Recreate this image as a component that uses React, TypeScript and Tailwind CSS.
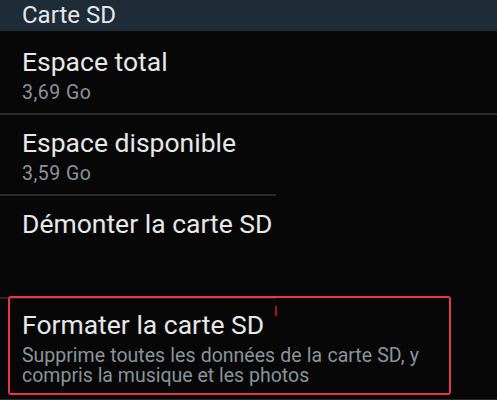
const font = { fontFamily: "Roboto, 'Noto Sans', sans-serif" };

function Row({ title, sub, pt }: { title: string; sub: string; pt: string }) {
  return (
    <div className={`px-[22px] pb-[9px] ${pt}`}>
      <div className="text-[26.5px] leading-[30px] text-[#e8e8e8]">{title}</div>
      <div className="mt-[5px] text-[19.5px] leading-[22px] tracking-[0.5px] text-[#8a949b]">{sub}</div>
    </div>
  );
}

export default function App() {
  return (
    <div className="h-[400px] w-[497px] overflow-hidden bg-[#070707]" style={font}>
      <div className="h-[31px] bg-[#1f2c38] px-[22px] text-[24px] leading-[31px] text-[#e4e8ec]">
        Carte SD
      </div>

      <Row title="Espace total" sub="3,69 Go" pt="pt-[16px]" />
      <div className="h-[2px] bg-[#2a2a2a]" />

      <Row title="Espace disponible" sub="3,59 Go" pt="pt-[13px]" />
      <div className="h-[2px] w-[276px] bg-[#2a2a2a]" />

      <div className="h-[101px] px-[22px] pt-[13px]">
        <div className="text-[26.5px] leading-[30px] text-[#e8e8e8]">Démonter la carte SD</div>
      </div>
      <div className="h-[2px] w-[276px] bg-[#262626]" />

      <div className="relative -mt-[3px] ml-[8px] h-[99px] w-[443px] rounded-[3px] border-2 border-[#e8344f] pl-[12px] pt-[12px]">
        <span className="absolute left-[265px] top-[8px] h-[10px] w-[1.5px] bg-[#b0101c]" />
        <div className="text-[26.5px] leading-[30px] text-[#e8e8e8]">Formater la carte SD</div>
        <p className="mt-[6px] w-[397px] text-justify text-[19.5px] leading-[20px] text-[#8a949b]">
          Supprime toutes les données de la carte SD, y compris la musique et les photos
        </p>
      </div>
      <div className="mt-[4px] h-[2px] bg-[#2a2a2a]" />
    </div>
  );
}
